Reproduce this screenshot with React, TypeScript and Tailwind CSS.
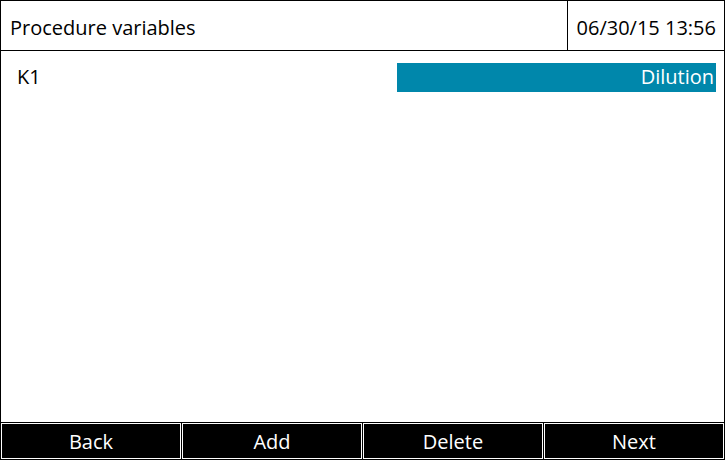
import * as React from "react"

const buttons = ["Back", "Add", "Delete", "Next"]

const App: React.FC = () => {
  return (
    <div
      className="w-[725px] h-[460px] bg-white border border-black flex flex-col text-black text-[20px]"
      style={{ fontFamily: '"Open Sans", "Noto Sans", sans-serif' }}
    >
      {/* title bar */}
      <div className="h-[50px] flex border-b border-black shrink-0">
        <div className="w-[567px] border-r border-black flex items-center pl-[9px] pt-[4px]">
          Procedure variables
        </div>
        <div className="flex-1 flex items-center justify-end pr-[8px] pt-[4px]">
          06/30/15 13:56
        </div>
      </div>

      {/* variables list */}
      <div className="flex-1 pt-[11px]">
        <div className="flex items-center justify-between pr-[8px]">
          <span className="pl-[16px]">K1</span>
          <div className="w-[319px] h-[29px] bg-[#0087ab] text-white flex items-center justify-end pr-[2px]">
            Dilution
          </div>
        </div>
      </div>

      {/* soft keys */}
      <div className="h-[37px] bg-black flex gap-[1px] pt-[1px] shrink-0">
        {buttons.map((b) => (
          <div
            key={b}
            className="flex-1 border border-white bg-black text-white flex items-center justify-center pt-[2px]"
          >
            {b}
          </div>
        ))}
      </div>
    </div>
  )
}

export default App
